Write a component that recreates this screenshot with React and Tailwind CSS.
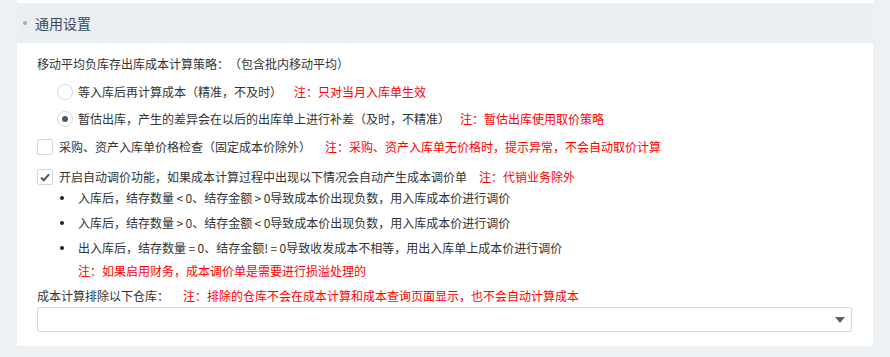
const font = { fontFamily: '"Noto Sans CJK SC", "Noto Sans", sans-serif' }

const Note = ({ className = '', children }) => (
  <span className={`text-[#ff0000] ${className}`}>{children}</span>
)

const Radio = ({ checked, label, note, noteClass }) => (
  <div className="flex h-[20px] items-center pl-[20px]">
    <span className="flex h-[16px] w-[16px] items-center justify-center rounded-full border border-[#d3d9de] bg-white">
      {checked && <span className="h-[6px] w-[6px] rounded-full bg-[#4b5563]" />}
    </span>
    <span className="ml-[5px]">{label}</span>
    <Note className={noteClass}>{note}</Note>
  </div>
)

const Checkbox = ({ checked, label, note, noteClass }) => (
  <div className="flex h-[20px] items-center">
    <span className="flex h-[16px] w-[16px] items-center justify-center rounded-[2px] border border-[#d3d9de] bg-white">
      {checked && (
        <svg width="10" height="9" viewBox="0 0 10 9">
          <path d="M1 4.6 L3.8 7.2 L9 1.4" fill="none" stroke="#4b5563" strokeWidth="2" />
        </svg>
      )}
    </span>
    <span className="ml-[6px]">{label}</span>
    <Note className={noteClass}>{note}</Note>
  </div>
)

const Bullet = ({ className = '', children }) => (
  <div className={`flex h-[20px] items-center pl-[23px] ${className}`}>
    <span className="h-[4px] w-[4px] rounded-full bg-[#222]" />
    <span className="ml-[14px]">{children}</span>
  </div>
)

export default function App() {
  return (
    <div className="h-[357px] w-[890px] overflow-hidden bg-[#eef1f3] px-[17px] text-[12px] text-[#333]" style={font}>
      <div className="h-[3px] bg-white" />
      <div className="flex h-[40px] items-center bg-[#eceff1] pl-[6px]">
        <span className="h-[4px] w-[4px] rounded-full bg-[#a3abb3]" />
        <span className="ml-[8px] text-[14px] text-[#3a4a5c]">通用设置</span>
      </div>
      <div className="h-[303px] bg-white px-[20px] pt-[11px]">
        <div className="flex h-[20px] items-center">
          <span>移动平均负库存出库成本计算策略：</span>
          <span>（包含批内移动平均）</span>
        </div>
        <div className="mt-[8px]">
          <Radio label="等入库后再计算成本（精准，不及时）" note="注：只对当月入库单生效" noteClass="ml-[12px]" />
        </div>
        <div className="mt-[7px]">
          <Radio checked label="暂估出库，产生的差异会在以后的出库单上进行补差（及时，不精准）" note="注：暂估出库使用取价策略" noteClass="ml-[10px]" />
        </div>
        <div className="mt-[8px]">
          <Checkbox label="采购、资产入库单价格检查（固定成本价除外）" note="注：采购、资产入库单无价格时，提示异常，不会自动取价计算" noteClass="ml-[14px]" />
        </div>
        <div className="mt-[10px]">
          <Checkbox checked label="开启自动调价功能，如果成本计算过程中出现以下情况会自动产生成本调价单" note="注：代销业务除外" noteClass="ml-[12px]" />
        </div>
        <Bullet className="mt-[1px]">入库后，结存数量{'\u2009'}&lt;{'\u2009'}0、结存金额{'\u2009'}&gt;{'\u2009'}0导致成本价出现负数，用入库成本价进行调价</Bullet>
        <Bullet className="mt-[5px]">入库后，结存数量{'\u2009'}&gt;{'\u2009'}0、结存金额{'\u2009'}&lt;{'\u2009'}0导致成本价出现负数，用入库成本价进行调价</Bullet>
        <Bullet className="mt-[5px]">出入库后，结存数量{'\u2009'}={'\u2009'}0、结存金额!{'\u2009'}={'\u2009'}0导致收发成本不相等，用出入库单上成本价进行调价</Bullet>
        <div className="mt-[3px] flex h-[20px] items-center pl-[41px]">
          <Note>注：如果启用财务，成本调价单是需要进行损溢处理的</Note>
        </div>
        <div className="mt-[5px] flex h-[20px] items-center">
          <span>成本计算排除以下仓库：</span>
          <Note className="ml-[14px]">注：排除的仓库不会在成本计算和成本查询页面显示，也不会自动计算成本</Note>
        </div>
        <div className="mt-[1px] flex h-[25px] w-[815px] items-center justify-end rounded-[2px] border border-[#d3d9de] bg-white pr-[6px]">
          <svg width="10" height="6" viewBox="0 0 10 6">
            <path d="M0 0 L10 0 L5 6 Z" fill="#5a6570" />
          </svg>
        </div>
      </div>
    </div>
  )
}
